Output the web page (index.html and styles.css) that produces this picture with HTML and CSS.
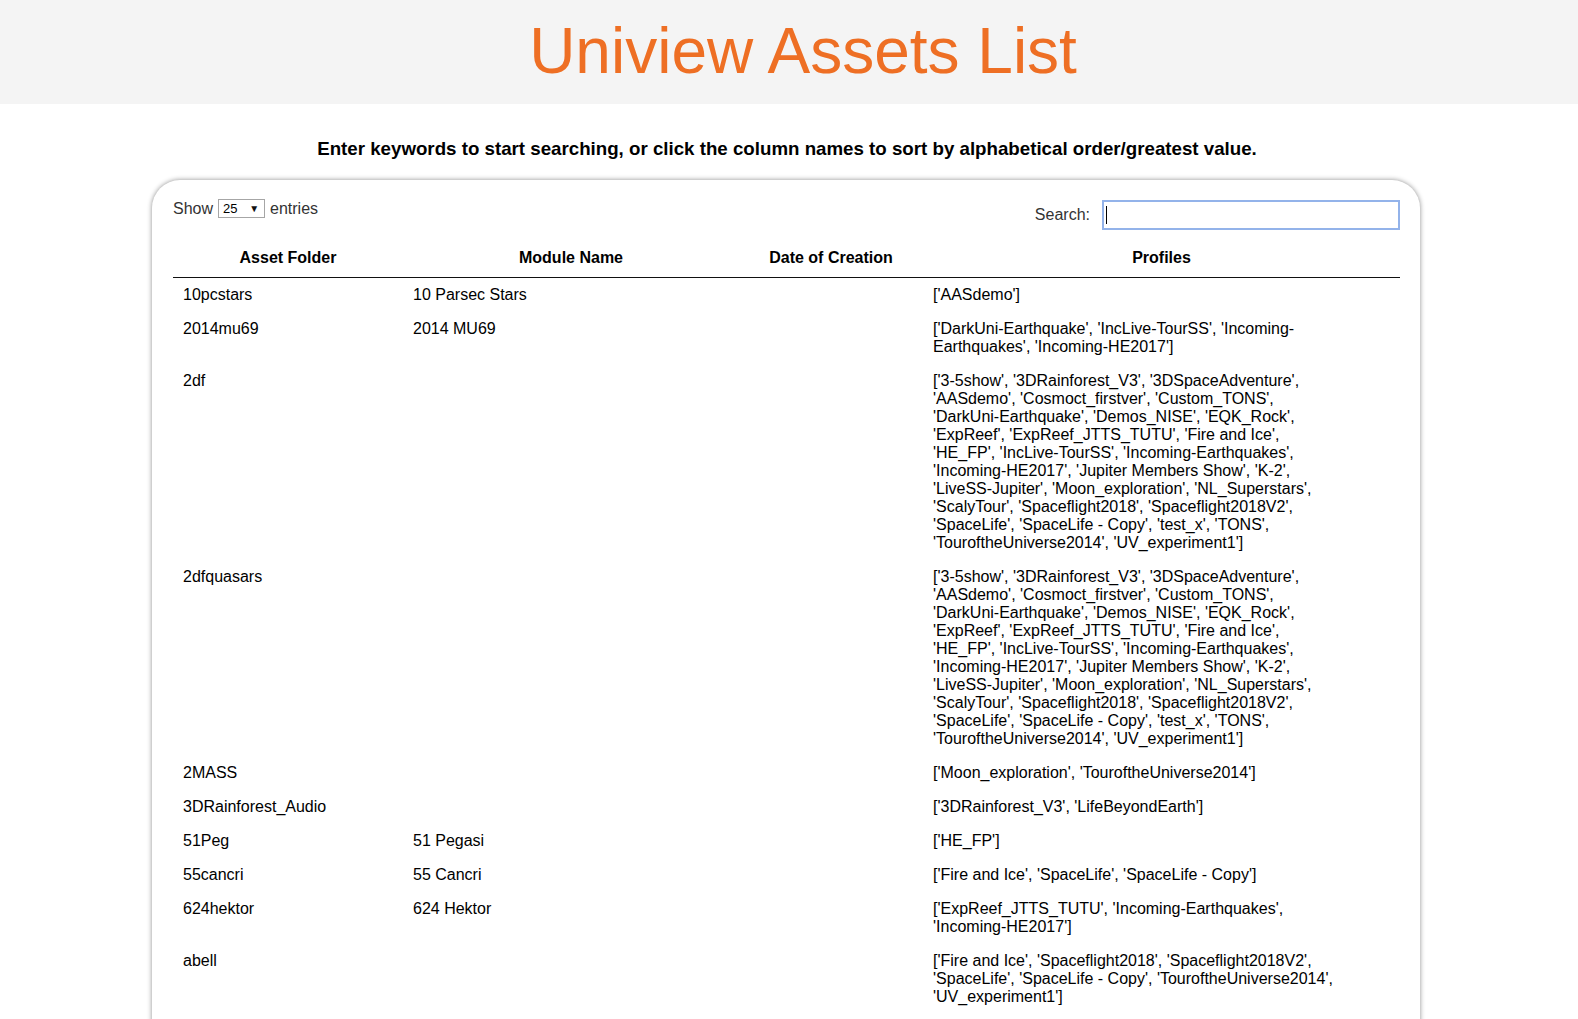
FILE: index.html
```html
<!DOCTYPE html>
<html lang="en">
<head>
<meta charset="utf-8">
<title>Uniview Assets List</title>
<link rel="stylesheet" href="styles.css">
</head>
<body>
<header class="top">
  <h1 class="title">Uniview Assets List</h1>
</header>
<h3 class="intro">Enter keywords to start searching, or click the column names to sort by alphabetical order/greatest value.</h3>
<main class="card">
  <div class="controls">
    <div class="length">
      <span>Show</span>
      <span class="select"><span class="select-val">25</span><span class="select-arrow">▼</span></span>
      <span>entries</span>
    </div>
    <div class="filter">
      <span>Search:</span>
      <span class="search"><span class="caret"></span></span>
    </div>
  </div>
  <table class="assets">
    <colgroup>
      <col class="c1"><col class="c2"><col class="c3"><col class="c4">
    </colgroup>
    <thead>
      <tr><th>Asset Folder</th><th>Module Name</th><th>Date of Creation</th><th>Profiles</th></tr>
    </thead>
    <tbody>
      <tr><td>10pcstars</td><td>10 Parsec Stars</td><td></td><td class="prof">['AASdemo']</td></tr>
      <tr><td>2014mu69</td><td>2014 MU69</td><td></td><td class="prof">['DarkUni-Earthquake', 'IncLive-TourSS', 'Incoming-Earthquakes', 'Incoming-HE2017']</td></tr>
      <tr><td>2df</td><td></td><td></td><td class="prof">['3-5show', '3DRainforest_V3', '3DSpaceAdventure', 'AASdemo', 'Cosmoct_firstver', 'Custom_TONS', 'DarkUni-Earthquake', 'Demos_NISE', 'EQK_Rock', 'ExpReef', 'ExpReef_JTTS_TUTU', 'Fire and Ice', 'HE_FP', 'IncLive-TourSS', 'Incoming-Earthquakes', 'Incoming-HE2017', 'Jupiter Members Show', 'K-2', 'LiveSS-Jupiter', 'Moon_exploration', 'NL_Superstars', 'ScalyTour', 'Spaceflight2018', 'Spaceflight2018V2', 'SpaceLife', 'SpaceLife - Copy', 'test_x', 'TONS', 'TouroftheUniverse2014', 'UV_experiment1']</td></tr>
      <tr><td>2dfquasars</td><td></td><td></td><td class="prof">['3-5show', '3DRainforest_V3', '3DSpaceAdventure', 'AASdemo', 'Cosmoct_firstver', 'Custom_TONS', 'DarkUni-Earthquake', 'Demos_NISE', 'EQK_Rock', 'ExpReef', 'ExpReef_JTTS_TUTU', 'Fire and Ice', 'HE_FP', 'IncLive-TourSS', 'Incoming-Earthquakes', 'Incoming-HE2017', 'Jupiter Members Show', 'K-2', 'LiveSS-Jupiter', 'Moon_exploration', 'NL_Superstars', 'ScalyTour', 'Spaceflight2018', 'Spaceflight2018V2', 'SpaceLife', 'SpaceLife - Copy', 'test_x', 'TONS', 'TouroftheUniverse2014', 'UV_experiment1']</td></tr>
      <tr><td>2MASS</td><td></td><td></td><td class="prof">['Moon_exploration', 'TouroftheUniverse2014']</td></tr>
      <tr><td>3DRainforest_Audio</td><td></td><td></td><td class="prof">['3DRainforest_V3', 'LifeBeyondEarth']</td></tr>
      <tr><td>51Peg</td><td>51 Pegasi</td><td></td><td class="prof">['HE_FP']</td></tr>
      <tr><td>55cancri</td><td>55 Cancri</td><td></td><td class="prof">['Fire and Ice', 'SpaceLife', 'SpaceLife - Copy']</td></tr>
      <tr><td>624hektor</td><td>624 Hektor</td><td></td><td class="prof">['ExpReef_JTTS_TUTU', 'Incoming-Earthquakes', 'Incoming-HE2017']</td></tr>
      <tr><td>abell</td><td></td><td></td><td class="prof">['Fire and Ice', 'Spaceflight2018', 'Spaceflight2018V2', 'SpaceLife', 'SpaceLife - Copy', 'TouroftheUniverse2014', 'UV_experiment1']</td></tr>
    </tbody>
  </table>
</main>
</body>
</html>
```

FILE: styles.css
```css
html, body {
  margin: 0;
  padding: 0;
  background: #ffffff;
  font-family: "Liberation Sans", Arial, sans-serif;
  color: #000;
}

.top {
  background: #f4f4f4;
  height: 104px;
  box-sizing: border-box;
  padding-top: 15px;
}

.title {
  margin: 0;
  font-size: 64px;
  line-height: 72px;
  font-weight: normal;
  color: #ee6f24;
  text-align: center;
  padding-left: 28px;
}

.intro {
  margin: 34px 0 21px;
  padding-right: 4px;
  font-size: 18.72px;
  line-height: 21px;
  font-weight: bold;
  text-align: center;
}

.card {
  width: 1268px;
  box-sizing: border-box;
  margin-left: 152px;
  padding: 20px 20px 40px 21px;
  background: #fff;
  border-radius: 28px;
  box-shadow: 0 0 5px rgba(0, 0, 0, 0.45);
}

.controls {
  display: flex;
  justify-content: space-between;
  align-items: flex-start;
  color: #333;
  font-size: 16px;
}

.length {
  display: flex;
  align-items: center;
  height: 19px;
  gap: 5px;
  margin-top: -1px;
}

.select {
  display: inline-flex;
  align-items: center;
  justify-content: space-between;
  width: 47px;
  height: 19px;
  box-sizing: border-box;
  border: 1px solid #a6a6a6;
  padding: 0 5px 0 4px;
  font-size: 13px;
  color: #000;
  background: #fff;
}

.select-arrow {
  font-size: 10px;
  color: #111;
}

.filter {
  display: flex;
  align-items: center;
  gap: 12px;
}

.search {
  position: relative;
  display: block;
  width: 298px;
  height: 30px;
  box-sizing: border-box;
  border: 2px solid #93b3ea;
  background: #fff;
}

.caret {
  position: absolute;
  left: 2px;
  top: 4px;
  width: 1px;
  height: 18px;
  background: #000;
}

.assets {
  width: 1227px;
  margin-top: 9px;
  border-collapse: collapse;
  table-layout: fixed;
  font-size: 16px;
  line-height: 18px;
}

.c1 { width: 230px; }
.c2 { width: 336px; }
.c3 { width: 184px; }
.c4 { width: 477px; }

.assets th {
  padding: 10px 18px;
  font-weight: bold;
  text-align: center;
  border-bottom: 1px solid #111;
}

.assets td {
  padding: 8px 10px;
  vertical-align: top;
  text-align: left;
}

.assets td.prof {
  padding-right: 64px;
}
```
